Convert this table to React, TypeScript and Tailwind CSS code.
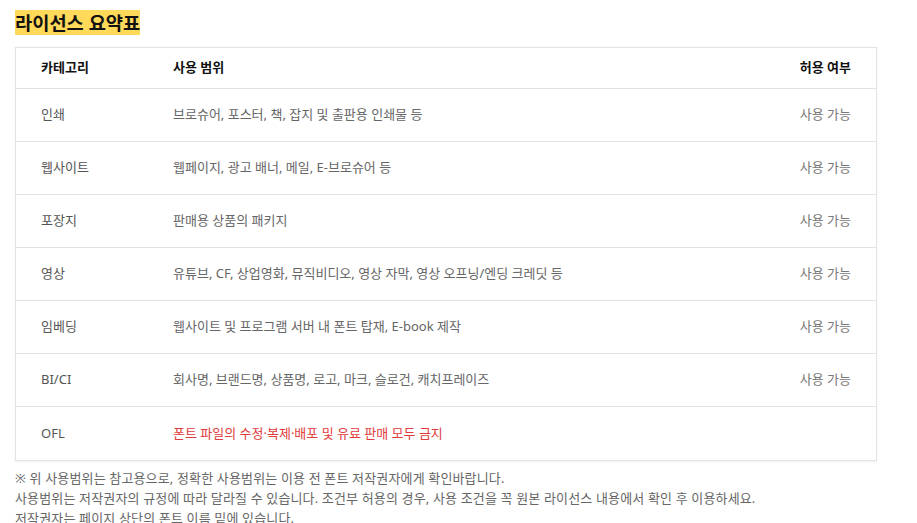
import React from "react";

type Row = {
  category: string;
  scope: string;
  allowed?: string;
  banned?: boolean;
};

const rows: Row[] = [
  { category: "인쇄", scope: "브로슈어, 포스터, 책, 잡지 및 출판용 인쇄물 등", allowed: "사용 가능" },
  { category: "웹사이트", scope: "웹페이지, 광고 배너, 메일, E-브로슈어 등", allowed: "사용 가능" },
  { category: "포장지", scope: "판매용 상품의 패키지", allowed: "사용 가능" },
  { category: "영상", scope: "유튜브, CF, 상업영화, 뮤직비디오, 영상 자막, 영상 오프닝/엔딩 크레딧 등", allowed: "사용 가능" },
  { category: "임베딩", scope: "웹사이트 및 프로그램 서버 내 폰트 탑재, E-book 제작", allowed: "사용 가능" },
  { category: "BI/CI", scope: "회사명, 브랜드명, 상품명, 로고, 마크, 슬로건, 캐치프레이즈", allowed: "사용 가능" },
  { category: "OFL", scope: "폰트 파일의 수정·복제·배포 및 유료 판매 모두 금지", banned: true },
];

export default function App() {
  return (
    <div
      className="bg-white px-[15px] pt-[10px] text-[13px] text-[#333]"
      style={{ fontFamily: '"Noto Sans", "Noto Sans CJK KR", sans-serif' }}
    >
      <div className="flex">
        <h2 className="bg-[#ffd95a] text-[18.7px] font-bold leading-[25px] text-[#111]">
          라이선스 요약표
        </h2>
      </div>

      <div className="mt-[12px] w-[862px] border border-[#e3e3e3] bg-white shadow-[0_1px_2px_rgba(0,0,0,0.06)]">
        <div className="flex h-[41px] items-center border-b border-[#e3e3e3] px-[25px] font-bold text-[#111]">
          <div className="w-[132px]">카테고리</div>
          <div className="flex-1">사용 범위</div>
          <div>허용 여부</div>
        </div>
        {rows.map((r, i) => (
          <div
            key={r.category}
            className={`flex h-[53px] items-center px-[25px] ${
              i < rows.length - 1 ? "border-b border-[#e3e3e3]" : ""
            }`}
          >
            <div className="w-[132px] text-[#555]">{r.category}</div>
            <div className={`flex-1 ${r.banned ? "text-[#e03c3c]" : "text-[#666]"}`}>
              {r.scope}
            </div>
            <div className="text-[#777]">{r.allowed}</div>
          </div>
        ))}
      </div>

      <div className="mt-[7px] leading-[20px] tracking-[0.15px] text-[#666]">
        <p>※ 위 사용범위는 참고용으로, 정확한 사용범위는 이용 전 폰트 저작권자에게 확인바랍니다.</p>
        <p>
          사용범위는 저작권자의 규정에 따라 달라질 수 있습니다. 조건부 허용의 경우, 사용 조건을 꼭 원본
          라이선스 내용에서 확인 후 이용하세요.
        </p>
        <p>저작권자는 페이지 상단의 폰트 이름 밑에 있습니다.</p>
      </div>
    </div>
  );
}
